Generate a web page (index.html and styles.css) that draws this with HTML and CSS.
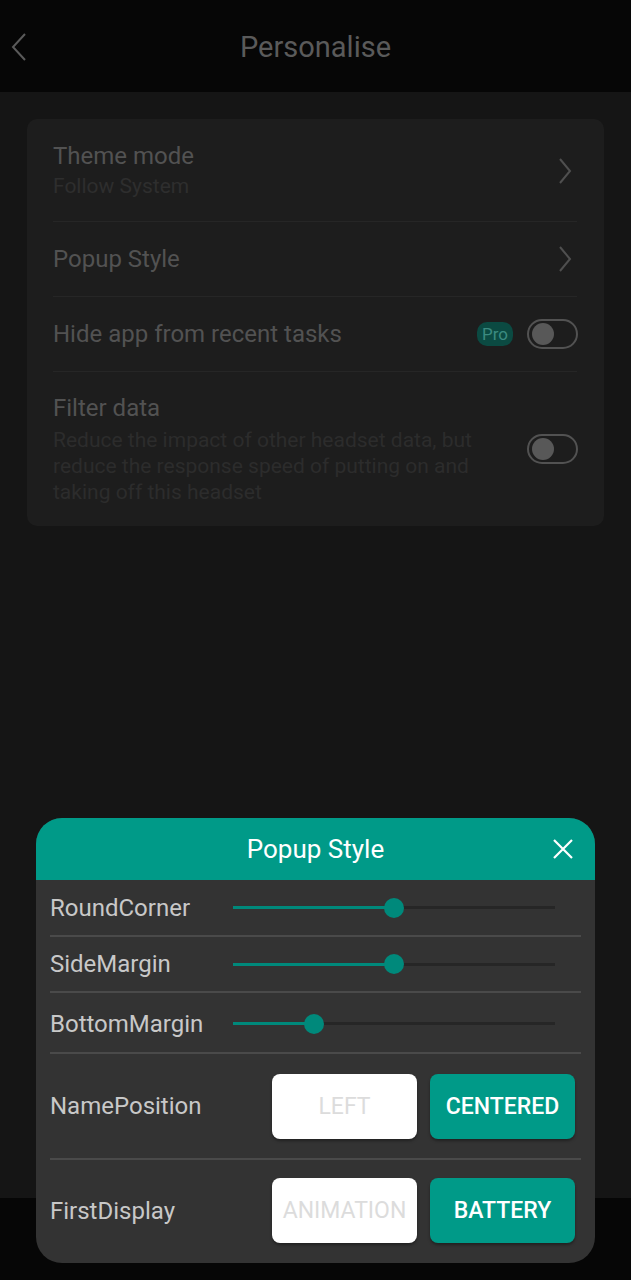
FILE: index.html
```html
<!DOCTYPE html>
<html lang="en">
<head>
    <meta charset="UTF-8">
    <meta name="viewport" content="width=device-width, initial-scale=1.0">
    <title>Personalise</title>
    <link rel="stylesheet" href="styles.css">
</head>
<body>
    <div class="screen">
        <header class="topbar">
            <svg class="back" width="20" height="30" viewBox="0 0 20 30">
                <path d="M15 2 L3 15 L15 28" fill="none" stroke="#5a5a5a" stroke-width="2"/>
            </svg>
            <h1>Personalise</h1>
        </header>

        <main>
            <div class="card">
                <div class="row">
                    <div class="row-text">
                        <div class="row-title">Theme mode</div>
                        <div class="row-sub">Follow System</div>
                    </div>
                    <svg class="chev" width="14" height="26" viewBox="0 0 14 26">
                        <path d="M2 1 L12 13 L2 25" fill="none" stroke="#4f4f4f" stroke-width="2"/>
                    </svg>
                </div>
                <div class="row">
                    <div class="row-text">
                        <div class="row-title">Popup Style</div>
                    </div>
                    <svg class="chev" width="14" height="26" viewBox="0 0 14 26">
                        <path d="M2 1 L12 13 L2 25" fill="none" stroke="#4f4f4f" stroke-width="2"/>
                    </svg>
                </div>
                <div class="row">
                    <div class="row-text">
                        <div class="row-title">Hide app from recent tasks</div>
                    </div>
                    <span class="pro">Pro</span>
                    <span class="toggle"><span class="knob"></span></span>
                </div>
                <div class="row row-last">
                    <div class="row-text">
                        <div class="row-title">Filter data</div>
                        <div class="row-desc">Reduce the impact of other headset data, but reduce the response speed of putting on and taking off this headset</div>
                    </div>
                    <span class="toggle"><span class="knob"></span></span>
                </div>
            </div>
        </main>

        <nav class="tabs">
            <span class="tab">Headset</span>
            <span class="tab tab-active">Personalise</span>
            <span class="tab">Me</span>
        </nav>

        <div class="popup">
            <div class="popup-head">
                <h2>Popup Style</h2>
                <svg class="close" width="22" height="22" viewBox="0 0 22 22">
                    <path d="M2 2 L20 20 M20 2 L2 20" stroke="#ffffff" stroke-width="2.2"/>
                </svg>
            </div>
            <div class="popup-body">
                <div class="prow">
                    <span class="plabel">RoundCorner</span>
                    <div class="slider"><span class="fill" style="width: 50%"></span><span class="thumb" style="left: 50%"></span></div>
                </div>
                <div class="prow">
                    <span class="plabel">SideMargin</span>
                    <div class="slider"><span class="fill" style="width: 50%"></span><span class="thumb" style="left: 50%"></span></div>
                </div>
                <div class="prow prow-tall">
                    <span class="plabel">BottomMargin</span>
                    <div class="slider"><span class="fill" style="width: 25%"></span><span class="thumb" style="left: 25%"></span></div>
                </div>
                <div class="prow prow-btns">
                    <span class="plabel">NamePosition</span>
                    <div class="choices">
                        <button class="choice">LEFT</button>
                        <button class="choice choice-on">CENTERED</button>
                    </div>
                </div>
                <div class="prow prow-btns prow-last">
                    <span class="plabel">FirstDisplay</span>
                    <div class="choices">
                        <button class="choice">ANIMATION</button>
                        <button class="choice choice-on">BATTERY</button>
                    </div>
                </div>
            </div>
        </div>
    </div>
</body>
</html>
```

FILE: styles.css
```css
* {
    margin: 0;
    padding: 0;
    box-sizing: border-box;
}

body {
    font-family: Roboto, "Liberation Sans", sans-serif;
    background-color: #050505;
}

.screen {
    position: relative;
    width: 631px;
    height: 1280px;
    display: flex;
    flex-direction: column;
    background-color: #151515;
    overflow: hidden;
}

.topbar {
    height: 92px;
    background-color: #060606;
    display: flex;
    align-items: center;
    justify-content: center;
    position: relative;
}

.topbar .back {
    position: absolute;
    left: 10px;
    top: 32px;
}

.topbar h1 {
    font-size: 29px;
    font-weight: 400;
    color: #5a5a5a;
    margin-top: 2px;
}

main {
    flex: 1;
    padding: 27px 27px 0;
}

.card {
    background-color: #1d1d1d;
    border-radius: 10px;
    padding: 2px 27px 0 26px;
}

.row {
    display: flex;
    align-items: center;
    gap: 14px;
    border-bottom: 1px solid #262626;
    min-height: 75px;
}

.row:first-child {
    min-height: 101px;
}

.row-last {
    border-bottom: none;
    min-height: 154px;
}

.row-text {
    flex: 1;
}

.row-title {
    font-size: 24px;
    color: #525252;
    line-height: 30px;
}

.row-sub {
    font-size: 21px;
    color: #2e2e2e;
    line-height: 30px;
}

.row-desc {
    font-size: 21px;
    color: #2c2c2c;
    line-height: 26px;
    padding-top: 4px;
    padding-right: 16px;
}

.chev {
    margin-right: 5px;
}

.pro {
    background-color: #0b4a42;
    color: #3b8b80;
    font-size: 17px;
    border-radius: 10px;
    padding: 2px 5px;
    line-height: 20px;
}

.toggle {
    width: 51px;
    height: 30px;
    border: 2px solid #525252;
    border-radius: 15px;
    display: flex;
    align-items: center;
    padding-left: 3px;
    margin-right: -1px;
    flex-shrink: 0;
}

.knob {
    width: 22px;
    height: 22px;
    border-radius: 50%;
    background-color: #585858;
}

.tabs {
    height: 82px;
    background-color: #060606;
    display: flex;
    align-items: flex-end;
    justify-content: space-around;
    padding-bottom: 12px;
}

.tab {
    font-size: 20px;
    color: #303030;
    width: 210px;
    text-align: center;
}

.tab-active {
    color: #0b5a50;
}

.popup {
    position: absolute;
    left: 36px;
    bottom: 17px;
    width: 559px;
    border-radius: 26px;
    overflow: hidden;
    background-color: #333333;
}

.popup-head {
    height: 62px;
    background-color: #009a88;
    display: flex;
    align-items: center;
    justify-content: center;
    position: relative;
}

.popup-head h2 {
    font-size: 26px;
    font-weight: 400;
    color: #ffffff;
}

.popup-head .close {
    position: absolute;
    right: 21px;
    top: 20px;
}

.popup-body {
    padding: 0 14px;
}

.prow {
    display: flex;
    align-items: center;
    height: 56px;
    border-bottom: 2px solid #4a4a4a;
}

.prow:first-child {
    height: 57px;
}

.prow-tall {
    height: 61px;
    padding-top: 2px;
}

.prow-btns {
    height: 106px;
}

.prow-last {
    border-bottom: none;
    height: 103px;
    padding-bottom: 2px;
}

.plabel {
    font-size: 24px;
    color: #c8c8c8;
    flex: 1;
}

.slider {
    position: relative;
    width: 322px;
    height: 3px;
    background-color: #262626;
    margin-right: 26px;
}

.fill {
    position: absolute;
    left: 0;
    top: 0;
    bottom: 0;
    background-color: #00897b;
}

.thumb {
    position: absolute;
    top: 50%;
    width: 20px;
    height: 20px;
    margin: -10px 0 0 -10px;
    border-radius: 50%;
    background-color: #00897b;
}

.choices {
    display: flex;
    gap: 13px;
    margin-right: 6px;
}

.choice {
    width: 145px;
    height: 65px;
    border: none;
    border-radius: 8px;
    background-color: #ffffff;
    color: #dcdcdc;
    font-family: Roboto, "Liberation Sans", sans-serif;
    font-size: 23px;
    box-shadow: 0 2px 3px rgba(0, 0, 0, 0.35);
}

.choice-on {
    background-color: #009a88;
    color: #ffffff;
    font-weight: 500;
}
```
